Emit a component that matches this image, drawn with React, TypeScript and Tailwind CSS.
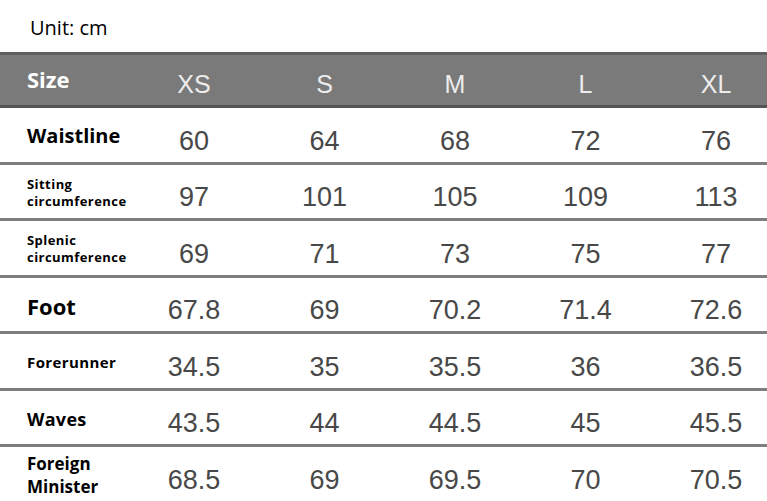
const sizes = ["XS", "S", "M", "L", "XL"];

type Row = {
  label: string[];
  cls: string;
  values: string[];
};

const rows: Row[] = [
  { label: ["Waistline"], cls: "text-[20px] leading-[24px]", values: ["60", "64", "68", "72", "76"] },
  { label: ["Sitting", "circumference"], cls: "text-[13px] leading-[17px] tracking-[0.45px]", values: ["97", "101", "105", "109", "113"] },
  { label: ["Splenic", "circumference"], cls: "text-[13px] leading-[17px] tracking-[0.45px]", values: ["69", "71", "73", "75", "77"] },
  { label: ["Foot"], cls: "text-[22px] leading-[26px]", values: ["67.8", "69", "70.2", "71.4", "72.6"] },
  { label: ["Forerunner"], cls: "text-[15px] leading-[20px] tracking-[0.4px]", values: ["34.5", "35", "35.5", "36", "36.5"] },
  { label: ["Waves"], cls: "text-[18px] leading-[22px] tracking-[0.3px]", values: ["43.5", "44", "44.5", "45", "45.5"] },
  { label: ["Foreign", "Minister"], cls: "text-[17px] leading-[23px]", values: ["68.5", "69", "69.5", "70", "70.5"] },
];

const cols = "grid grid-cols-[129px_130px_131px_130px_131px_130px]";

const App = () => {
  return (
    <div className="w-[767px] h-[501px] overflow-hidden bg-white font-['Open_Sans',sans-serif]">
      <div className="h-[52px] pl-[30px] pt-[14px] text-[20px] leading-[28px] text-black">
        Unit: cm
      </div>

      {/* header */}
      <div className={`${cols} h-[56px] bg-[#7a7a7a] border-t-[3px] border-b-[3px] border-t-[#5f5f5f] border-b-[#555555] box-border`}>
        <div className="pl-[27px] flex items-center pb-[2px] text-white font-bold text-[22px]">Size</div>
        {sizes.map((s) => (
          <div key={s} className="flex items-center justify-center pt-[10px] text-[25px] text-[#ececec] font-['Liberation_Sans',sans-serif]">
            {s}
          </div>
        ))}
      </div>

      {rows.map((row, i) => (
        <div
          key={i}
          className={`${cols} h-[56.5px] box-border border-b-[3px] border-[#7e7e7e]`}
        >
          <div className={`pl-[27px] flex flex-col justify-center pt-[3px] font-bold text-black ${row.cls}`}>
            {row.label.map((l) => (
              <span key={l}>{l}</span>
            ))}
          </div>
          {row.values.map((v, j) => (
            <div key={j} className="flex items-center justify-center pt-[12px] text-[27px] text-[#484848] font-['Liberation_Sans',sans-serif]">
              {v}
            </div>
          ))}
        </div>
      ))}
    </div>
  );
};

export default App;
